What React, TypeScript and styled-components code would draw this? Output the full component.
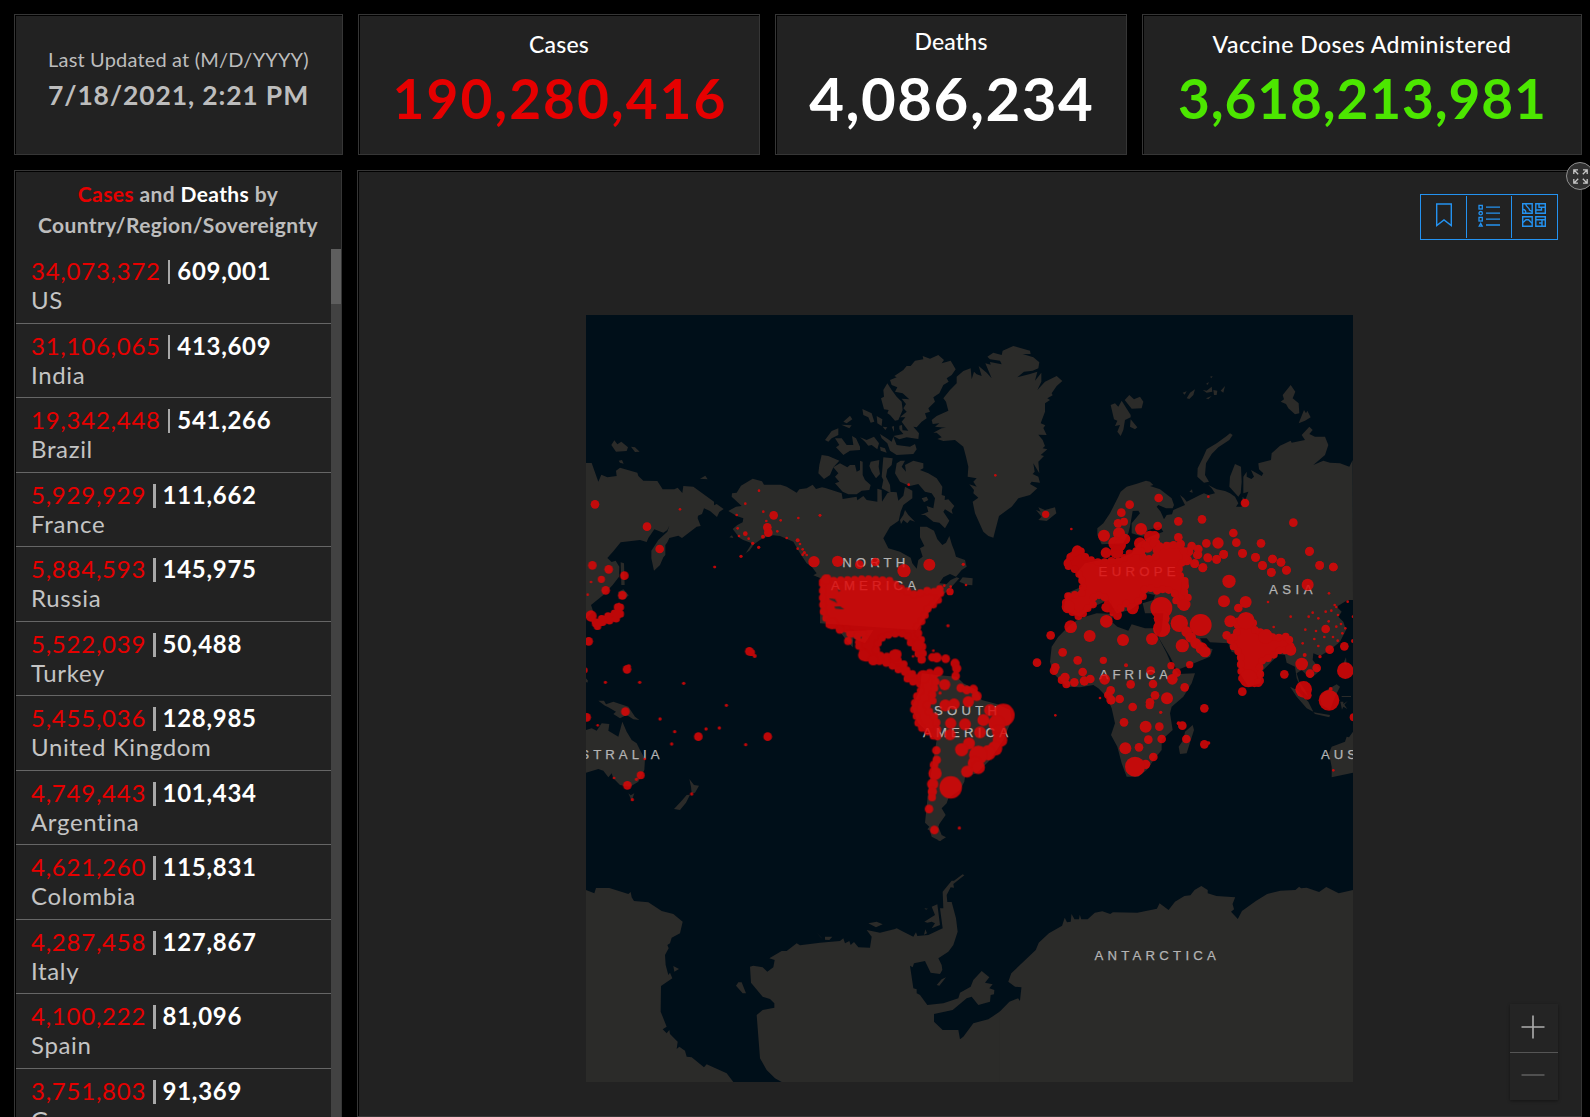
import React from 'react';
import styled, { createGlobalStyle, css } from 'styled-components';

const GlobalStyle = createGlobalStyle`
  * { box-sizing: border-box; }
  html, body { margin: 0; padding: 0; background: #000; overflow: hidden; }
  body { font-family: Lato, 'Open Sans', sans-serif; }
`;

const Dashboard = styled.main`
  width: 1590px;
  height: 1117px;
  padding: 14px 8px 0 14px;
  display: flex;
  flex-direction: column;
  gap: 15px;
  overflow: hidden;
  background: #000;
  color: #bdbdbd;
`;

const TopRow = styled.header`
  display: grid;
  grid-template-columns: 329px 402px 352px 440px;
  gap: 15px;
  height: 141px;
`;

const MainRow = styled.div`
  flex: 1;
  min-height: 0;
  display: grid;
  grid-template-columns: 328px 1225px;
  gap: 15px;
`;

const panel = css`
  background: #222;
  border: 1px solid #363636;
  box-shadow: inset 1px 1px 0 #000;
`;

const Card = styled.section<{ $top: number }>`
  ${panel}
  display: flex;
  flex-direction: column;
  align-items: center;
  padding-top: ${(p) => p.$top}px;
  white-space: nowrap;
`;

const UpdatedLabel = styled.div`
  font-size: 20px;
  line-height: 24px;
  letter-spacing: 0.17px;
`;

const UpdatedValue = styled.div`
  font-size: 26.5px;
  font-weight: 700;
  line-height: 32px;
  margin-top: 8px;
  letter-spacing: 0.85px;
`;

const CardTitle = styled.div<{ $spacing?: number }>`
  color: #fff;
  font-size: 23px;
  font-weight: 500;
  line-height: 28px;
  letter-spacing: ${(p) => p.$spacing ?? 0.2}px;
`;

const Figure = styled.div<{ $color: string; $size: number; $gap: number; $spacing: number }>`
  color: ${(p) => p.$color};
  font-size: ${(p) => p.$size}px;
  font-weight: 700;
  line-height: 64px;
  margin-top: ${(p) => p.$gap}px;
  margin-right: ${(p) => -p.$spacing}px;
  letter-spacing: ${(p) => p.$spacing}px;
`;

const ListPanel = styled.section`
  ${panel}
  border-bottom: 0;
  display: flex;
  flex-direction: column;
  min-height: 0;
  overflow: hidden;
`;

const ListTitle = styled.h2`
  margin: 0;
  height: 78px;
  padding: 7px 0 0;
  text-align: center;
  font-size: 21px;
  line-height: 31px;
  font-weight: 700;
  letter-spacing: 0.38px;
  flex: none;
`;

const Tint = styled.span<{ $color: string }>`
  color: ${(p) => p.$color};
`;

const ListBody = styled.div`
  flex: 1;
  min-height: 0;
  display: flex;
`;

const Rows = styled.ul`
  list-style: none;
  margin: 0 0 0 1px;
  padding: 0;
  flex: 1;
  overflow: hidden;
`;

const Row = styled.li`
  height: 74.5px;
  padding: 7px 0 0 15px;
  border-bottom: 1px solid #666;
  font-size: 24px;
  line-height: 29px;
  white-space: nowrap;
`;

const RowFigures = styled.div`
  display: flex;
`;

const RowCases = styled.span`
  color: #e60000;
  letter-spacing: 0.75px;
`;

const RowBar = styled.i`
  width: 2.5px;
  height: 24px;
  margin: 4px 7px 0 7px;
  background: #a8a8a8;
`;

const RowDeaths = styled.span`
  color: #fff;
  font-weight: 700;
  letter-spacing: 0.7px;
`;

const RowName = styled.div`
  color: #c4c4c4;
  letter-spacing: 0.65px;
`;

const ScrollTrack = styled.div`
  width: 10px;
  background: #424242;
`;

const ScrollThumb = styled.div`
  height: 55px;
  background: #5e5e5e;
`;

const MapPanel = styled.section`
  ${panel}
  position: relative;
  padding: 144px 0 0 228px;
`;

const MapSvg = styled.svg`
  display: block;
  width: 767px;
  height: 767px;
`;

const Toolbar = styled.div`
  position: absolute;
  top: 23px;
  right: 23px;
  width: 138px;
  height: 46px;
  display: flex;
  border: 1px solid #2492f0;
  padding: 1px 0;
`;

const ToolButton = styled.button<{ $shift?: number }>`
  flex: 1;
  border: 0;
  padding: 0 0 4px;
  background: none;
  color: #2492f0;
  display: flex;
  align-items: center;
  justify-content: center;
  & + & { border-left: 1px solid #2492f0; }
  svg { margin-left: ${(p) => p.$shift ?? 0}px; }
`;

const ExpandButton = styled.button`
  position: absolute;
  top: -9px;
  right: -13px;
  width: 28px;
  height: 28px;
  padding: 0;
  border: 1px solid #8f8f8f;
  border-radius: 50%;
  background: #303030;
  color: #c8c8c8;
  display: flex;
  align-items: center;
  justify-content: center;
`;

const ZoomBox = styled.div`
  position: absolute;
  right: 23px;
  top: 833px;
  width: 48px;
  height: 96px;
  display: flex;
  flex-direction: column;
  background: #242424;
  box-shadow: 0 1px 3px rgba(0, 0, 0, 0.4);
`;

const ZoomButton = styled.button<{ $dim?: boolean }>`
  flex: 1;
  padding: 0 2px 2px 0;
  border: 0;
  background: none;
  color: ${(p) => (p.$dim ? '#5c5c5c' : '#adadad')};
  display: flex;
  align-items: center;
  justify-content: center;
  & + & { border-top: 1px solid #555; }
`;

const countries: [string, string, string][] = [
  ['34,073,372', '609,001', 'US'],
  ['31,106,065', '413,609', 'India'],
  ['19,342,448', '541,266', 'Brazil'],
  ['5,929,929', '111,662', 'France'],
  ['5,884,593', '145,975', 'Russia'],
  ['5,522,039', '50,488', 'Turkey'],
  ['5,455,036', '128,985', 'United Kingdom'],
  ['4,749,443', '101,434', 'Argentina'],
  ['4,621,260', '115,831', 'Colombia'],
  ['4,287,458', '127,867', 'Italy'],
  ['4,100,222', '81,096', 'Spain'],
  ['3,751,803', '91,369', 'Germany'],
];

/* Map geometry is kept per region, in thirds of a pixel from the region's origin. */
type Region = { at: [number, number]; sx?: number; land: string; cases?: string; dots: number[][] };

const regions: Region[] = [
  {
    at: [580, 310],
    land: `M18 459L35 459L55 515L64 494L82 502L110 498L108 482L120 473L172 488L175 498L190 512L232 513L248 538L283 538L293 533L307 549L310 528L340 530L402 575L402 586L410 582L431 597L418 606L411 621L390 603L372 595L366 612L354 617L353 625L362 648L350 650L306 684L295 677L268 684L262 697L256 705L256 735L250 742L240 765L222 782L214 745L214 722L235 690L262 665L268 647L262 660L250 668L223 658L205 684L200 696L180 690L122 697L100 724L82 744L95 756L107 752L118 770L117 800L98 825L70 855L33 885L40 905L18 925Z
      M122 757L132 760L134 825L124 825ZM115 845L130 838L146 856L134 868L116 868Z
      M94 405L103 391L112 403L124 395L144 412L140 423L108 425ZM153 410L165 412L179 425L165 426ZM116 452L126 450L131 461L120 458ZM360 506L376 497L383 508ZM448 682L456 676L460 684Z`,
    dots: [[45,583,13],[201,650,13],[239,717,13],[300,598,4],[537,542,4],[496,581,4],[550,605,4],[470,615,4],[581,616,13],[602,631,4],[655,624,4],[720,616,4],[559,633,4],[562,652,13],[565,668,13],[592,664,4],[549,680,6],[473,655,4],[477,678,4],[496,671,7],[506,686,4],[518,700,5],[536,712,5],[483,739,5],[620,684,4],[653,691,6],[660,702,4],[653,716,4],[668,718,4],[673,728,5],[668,734,4],[680,735,4],[702,755,17],[404,771,4]],
  },
  {
    at: [800, 330],
    land: `M-215 543L-192 530L-175 528L-205 500L-204 490L-190 488L-177 467L-142 446L-114 454L-108 464L-58 464L-40 470L-10 488L-2 478L20 475L38 464L48 477L66 472L76 474L125 490L128 507L170 500L172 511L190 498L200 510L232 515L232 476L245 480L246 515L262 490L270 485L290 487L295 512L310 497L315 470L337 482L337 505L310 525L302 545L296 572L270 590L250 625L265 655L300 665L332 683L337 700L350 716L355 690L368 680L360 655L373 648L360 622L360 590L380 590L402 602L412 628L427 645L438 638L448 618L456 645L463 662L468 680L495 690L500 710L485 720L468 740L450 732L430 742L418 760L440 762L452 750L470 742L478 745L455 770L440 785L420 800L350 900L60 880L62 745L40 736L50 730L35 710L20 700L0 670L-20 635L-60 618L-80 616L-108 623L-120 630L-138 643L-152 662L-182 682L-162 668L-144 640L-170 630L-182 623L-192 610L-202 597L-188 585L-172 577L-170 565L-190 558Z
      M478 755L488 742L518 745L517 766L500 764Z
      M270 150L290 142L283 138L310 120L320 108L332 108L345 92L370 88L368 78L390 86L415 75L432 90L425 100L452 92L467 118L455 135L440 145L446 155L430 165L418 190L400 202L405 215L385 235L390 245L375 250L380 265L365 275L350 292L340 290L357 310L355 327L320 322L298 328L280 318L310 312L300 300L325 302L305 275L316 262L300 262L320 245L310 235L318 222L305 206L328 208L308 190L285 185L292 172L275 165Z
      M262 160L275 180L290 200L305 215L308 240L295 270L285 272L270 255L262 250L266 240L252 238L243 205L252 200L250 180Z
      M187 237L215 250L223 275L212 278L205 262L190 255ZM230 258L247 268L245 288L232 280ZM130 275L150 257L157 268L140 280ZM124 284L155 286L148 295ZM75 330L95 303L115 295L115 315L95 325L85 335ZM105 325L125 325L140 345L160 345L156 318L168 325L180 350L180 360L150 362L130 375L108 352L118 345ZM180 322L200 330L222 320L237 340L232 358L215 345L205 347L195 335ZM240 312L260 325L275 335L280 320L290 345L330 350L345 342L350 358L340 372L290 375L270 362L262 340L245 325ZM240 350L255 355L260 368L242 362ZM248 290L262 292L256 300ZM275 290L282 288L282 306ZM298 287L306 285L308 305L298 298Z
      M65 375L85 378L118 392L100 412L90 435L72 447L55 430L58 405Z
      M100 412L120 400L142 412L150 405L165 405L170 425L180 420L180 392L188 395L188 435L195 450L212 465L208 480L185 482L170 493L145 493L128 485L105 460L118 455L105 440L115 430Z
      M212 395L238 390L236 410L240 432L228 445L215 425L208 408Z
      M250 382L278 385L275 405L262 418L258 440L270 465L272 490L245 475L250 450L245 440Z
      M290 400L302 392L315 392L305 410L318 425L315 405L340 392L370 400L370 415L360 420L385 430L410 445L427 470L425 495L435 498L434 510L445 508L463 528L455 540L458 552L435 538L430 545L448 572L435 595L418 578L400 575L375 555L362 555L385 545L380 528L400 535L405 505L395 490L375 485L355 462L330 468L300 455L285 430Z
      M315 540L325 555L345 575L330 570L322 580L310 570L303 582L300 570L310 555ZM365 505L380 500L385 510L372 517Z
      M395 270L410 258L445 242L438 215L430 205L450 180L470 160L470 140L490 123L512 115L515 148L522 125L530 133L545 138L536 108L560 128L575 145L556 100L572 104L570 96L605 103L600 92L570 88L562 80L580 68L605 75L608 62L640 48L690 62L692 72L668 72L700 82L718 97L715 115L698 122L672 125L652 142L690 132L712 125L705 152L724 128L724 155L712 180L735 155L770 138L787 153L770 168L755 190L758 196L742 205L750 210L735 220L735 245L722 280L736 286L730 294L740 315L715 314L728 330L735 348L728 355L742 358L722 375L732 378L715 395L718 430L700 400L704 425L698 432L715 440L720 458L695 455L690 462L712 475L690 495L655 505L635 530L597 558L580 623L565 618L550 605L525 550L518 515L535 503L520 490L522 480L508 463L530 470L520 455L530 445L503 440L505 410L498 380L490 350L465 330L430 333L412 327L425 322L410 308L400 308L425 295L438 293L405 290L418 280L398 282Z
      M708 540L722 545L715 532L735 540L765 532L769 550L740 573L715 570L725 560Z`,
    dots: [[586,436,4],[326,464,4],[60,556,4],[737,553,11],[113,694,17],[178,704,13],[226,696,13],[312,722,20],[388,704,18],[490,703,5],[498,765,4],[450,785,11],[433,767,4],[452,770,4]],
  },
  {
    at: [1060, 330],
    land: `M152 225L165 220L175 230L185 212L212 255L212 262L195 270L190 300L182 318L172 305L180 285L165 288L172 272L162 268ZM194 210L208 195L222 208L240 200L250 215L245 235L215 236ZM212 268L232 292L225 298L210 290Z
      M380 205L390 188L405 178L400 195L388 207ZM368 188L380 184L374 194ZM428 180L440 182L455 170L457 185L440 188ZM460 180L472 182L470 195L462 195ZM482 182L495 168L490 188ZM438 205L455 198L445 208ZM450 140L458 138L454 145ZM438 162L446 156L444 164Z
      M668 195L692 165L706 185L698 205L716 220L718 250L705 253L685 235L678 222L662 215L672 208ZM716 280L732 240L738 250L742 242L752 262L735 272Z
      M518 315L508 330L475 352L455 372L438 400L435 435L447 455L432 458L412 440L413 415L428 385L440 358L470 340L500 318L510 310Z
      M525 402L543 410L545 455L542 490L535 500L508 470L510 440ZM388 485L396 478L398 488Z
      M112 595L130 580L150 550L175 500L182 485L200 470L228 462L258 452L270 455L280 465L270 468L300 478L335 505L342 525L338 535L318 535L295 525L290 530L302 545L312 568L320 555L336 553L340 540L375 525L360 495L372 505L380 515L420 495L432 490L445 495L465 490L455 475L445 465L470 478L495 483L510 490L525 500L535 520L528 530L545 530L548 500L556 510L565 485L550 490L550 440L560 425L560 440L574 447L582 440L573 420L605 438L610 430L597 418L595 400L633 390L635 370L660 347L692 332L695 338L735 330L725 315L748 290L758 300L748 312L765 320L795 320L805 345L795 375L760 405L790 392L810 398L840 400L868 410L878 390L879 810L863 810L830 830L845 845L835 860L850 875L858 900L840 935L810 960L780 978L760 970L758 990L782 1020L765 1035L750 1045L725 1020L710 1030L718 1055L735 1080L745 1100L725 1080L710 1045L705 1010L680 998L675 975L655 972L640 990L610 1020L600 1060L565 1070L540 1030L530 970L515 965L505 940L450 937L440 925L420 925L435 950L458 958L450 980L365 1015L350 1020L330 980L295 922L305 900L310 850L255 850L248 820L280 810L285 795L260 790L240 820L210 840L170 850L145 810L100 830L60 860L10 840L20 790L65 770L50 730L75 700L120 690L180 685L215 670L235 640L270 620L310 605L300 590L265 600L250 620L215 610L215 580L240 550L235 542L218 543L210 590L205 610L190 640L125 643L112 615Z`,
    dots: [[34,597,4],[296,504,13],[209,524,13],[184,548,13],[174,580,13],[192,575,12],[132,617,18],[243,597,18],[293,588,13],[355,574,13],[426,568,13],[445,500,4],[555,519,13],[700,578,13],[177,610,18],[195,627,16],[165,640,20],[180,645,18],[170,665,20],[138,668,16],[240,640,18],[262,650,18],[232,672,18],[270,620,18],[284,618,15],[285,640,16],[258,695,18],[355,622,13],[362,642,13],[520,609,13],[529,638,13],[474,639,17],[439,640,13],[395,648,13],[415,657,13],[412,675,13],[491,673,13],[470,688,13],[444,684,13],[547,670,13],[603,640,13],[586,682,13],[638,687,13],[663,696,13],[749,663,13],[779,706,13],[820,711,13],[608,707,13],[404,701,13],[429,712,13],[680,720,13],[634,727,13],[330,655,18],[300,662,18],[300,680,20],[310,700,24],[345,690,24],[365,672,18],[380,690,16],[386,665,14],[52,662,16],[40,685,20],[75,700,22],[30,700,18],[120,710,22],[160,705,20],[190,705,18],[215,690,18],[240,680,18]],
  },
  {
    at: [580, 560],
    land: `M18 510L35 505L50 512L65 490L88 492L85 512L115 530L127 485L140 515L155 540L170 550L180 570L195 597L193 630L175 665L150 680L120 675L100 655L95 640L85 652L70 632L55 627L18 638Z
      M145 700L152 706L163 700L155 722ZM328 657L342 675L357 677L345 698L335 700L333 680ZM320 705L330 704L318 728L300 750L282 747L305 722Z
      M55 422L72 422L78 433L100 425L145 440L165 470L178 480L160 478L140 465L120 475L100 462L108 455L85 442L75 437ZM18 355L24 362L22 368L18 366Z`,
    cases: 'M46 186L75 172L105 159L117 132L124 150L118 172L100 180L70 186L55 192L50 205Z',
    dots: [[37,16,13],[86,28,13],[133,47,13],[64,58,11],[33,66,4],[77,91,13],[23,104,4],[127,106,13],[33,168,17],[26,244,13],[14,331,9],[141,328,13],[146,320,7],[76,367,5],[179,367,5],[311,370,5],[404,21,4],[439,436,5],[240,477,5],[284,515,5],[275,552,5],[355,530,13],[378,507,5],[418,504,5],[497,554,5],[563,530,13],[508,274,13],[515,278,10],[524,288,6],[136,455,13],[20,472,13],[53,496,4],[194,597,4],[182,646,12],[169,658,5],[142,676,13],[102,654,4],[157,719,5],[335,702,5]],
  },
  {
    at: [790, 560],
    land: `M395 340L440 345L500 350L520 370L560 390L575 420L620 432L660 450L665 480L640 540L600 600L560 640L525 650L523 665L510 690L475 715L470 730L455 745L467 765L448 792L445 800L455 825L468 832L450 843L425 830L420 812L412 808L418 800L405 788L410 740L415 690L430 600L440 540L385 490L365 440L390 390Z
      M150 215L250 210L225 250L190 235L188 262L175 248Z`,
    cases: 'M98 65L108 52L125 62L190 59L230 57L300 62L335 86L375 104L410 92L440 96L452 84L454 92L443 125L414 145L399 179L379 205L394 240L400 275L395 300L387 290L382 270L362 248L349 221L318 221L290 226L268 238L258 268L273 289L302 289L318 274L326 286L324 302L344 314L351 334L371 344L385 356L402 341L431 336L436 352L438 375L426 400L432 420L411 435L418 455L438 474L442 500L442 536L435 531L415 516L386 498L382 475L370 445L378 412L392 395L390 372L354 361L344 336L318 326L300 312L270 304L250 304L229 294L216 270L199 248L228 236L218 218L205 228L184 224L170 206L150 211L142 196L119 196L101 160L98 124Z',
    dots: [[174,243,12],[464,374,17],[512,384,13],[530,390,13],[550,388,14],[560,408,15],[535,425,17],[427,292,13],[440,293,15],[467,296,13],[495,310,14],[500,325,14],[497,348,13],[445,335,15],[430,272,4],[369,289,4],[474,197,5],[450,399,5],[466,436,18],[492,432,17],[482,490,17],[525,493,18],[480,524,17],[580,480,18],[570,517,18],[640,465,34],[600,450,18],[620,490,25],[628,515,22],[630,540,22],[615,565,22],[595,578,23],[565,585,28],[555,610,22],[537,550,18],[515,569,20],[565,622,20],[531,635,18],[482,682,34],[439,571,13],[440,600,13],[432,615,13],[435,640,20],[428,672,17],[427,695,14],[426,712,12],[417,747,13],[433,810,13],[508,804,5],[108,58,15],[150,207,13],[180,220,12],[126,190,18],[385,255,17],[395,298,13],[316,285,18],[400,350,20],[222,285,18],[250,300,16]],
  },
  {
    at: [1030, 550],
    land: `M120 225L150 205L200 190L250 192L245 215L262 230L295 242L305 223L345 235L372 235L385 262L410 310L425 345L445 372L495 370L485 400L460 440L425 470L420 490L428 540L395 570L395 600L375 625L350 660L325 680L290 680L275 640L262 590L243 555L255 520L245 475L230 440L205 415L190 405L150 412L110 410L70 370L60 335L65 290L85 260Z
      M488 525L492 540L470 610L450 612L446 590L460 570L465 545Z
      M780 410L800 420L835 455L850 485L830 475L800 440ZM850 487L900 495L898 502L855 492ZM870 440L890 420L920 403L930 410L915 440L900 480L875 465ZM940 340L948 322L950 345ZM935 438L963 438L963 441L935 441ZM931 455L940 455L940 462L953 453L943 464L952 477L940 470L936 479Z
      M969 545L957 562L950 560L945 575L905 590L897 610L905 650L905 682L969 668Z`,
    cases: `M112 40L124 14L150 0L170 26L195 34L215 39L240 32L270 34L300 9L334 -1L334 19L350 29L379 19L379 -11L440 -16L455 -14L468 22L446 50L451 80L472 100L458 118L474 140L472 161L460 170L439 155L434 130L405 114L385 126L370 114L344 116L338 144L318 158L313 180L302 176L289 161L271 175L262 198L245 184L229 174L236 165L219 134L191 138L189 167L172 175L150 202L132 190L104 170L112 139L159 129L157 93L142 61L116 50Z
      M624 214L648 196L668 212L676 246L706 246L735 266L760 259L780 262L776 280L790 300L780 308L755 296L721 323L698 328L688 355L694 388L682 401L655 398L636 386L632 350L632 311L614 296L598 264L619 260Z`,
    dots: [[62,256,13],[122,230,19],[179,258,18],[229,214,19],[279,270,18],[21,338,13],[98,307,13],[76,352,13],[72,362,13],[143,331,13],[220,331,11],[288,346,6],[158,366,13],[105,382,14],[95,390,12],[109,403,12],[133,397,13],[163,393,14],[181,387,13],[224,388,16],[302,403,13],[362,362,13],[369,402,13],[423,347,11],[440,368,13],[427,388,16],[464,412,13],[479,344,11],[242,421,13],[235,435,13],[243,450,14],[269,447,13],[210,444,4],[308,471,13],[375,436,13],[360,457,13],[359,466,12],[411,445,18],[392,487,5],[282,517,13],[347,530,18],[388,530,13],[395,567,13],[355,569,13],[327,592,13],[286,595,18],[370,621,13],[347,643,14],[315,650,30],[76,496,4],[523,475,13],[457,527,13],[446,520,6],[469,567,13],[523,583,13],[536,579,5],[394,174,33],[395,205,24],[395,235,26],[366,267,18],[448,220,26],[512,225,33],[457,287,20],[470,245,16],[482,262,16],[497,280,16],[515,295,18],[525,305,17],[582,154,18],[597,94,20],[647,156,18],[625,174,13],[601,214,18],[590,256,13],[637,425,13],[763,373,13],[533,23,13],[560,28,13],[518,54,13],[494,41,13],[504,14,13],[581,13,13],[838,5,13],[638,10,13],[677,22,13],[697,46,13],[727,27,13],[724,67,13],[753,37,13],[769,61,13],[869,46,13],[910,51,13],[833,104,18],[897,130,4],[714,156,4],[782,200,4],[731,231,4],[848,188,4],[836,200,4],[865,205,4],[887,185,4],[904,182,4],[914,165,4],[919,171,4],[953,155,4],[924,195,4],[896,214,4],[933,222,4],[919,230,4],[946,235,4],[887,237,13],[858,243,4],[826,239,4],[853,267,4],[883,261,4],[909,261,4],[937,250,4],[923,272,4],[818,280,4],[865,288,4],[899,299,13],[943,289,13],[870,320,5],[824,315,6],[815,342,19],[860,354,13],[840,371,13],[946,362,25],[821,418,25],[832,436,13],[897,451,31],[902,417,6],[971,502,12],[969,200,4],[969,273,6],[910,661,4],[648,212,26],[655,385,27],[685,398,13],[782,300,17],[707,260,22],[227,172,13],[262,197,13],[308,176,17],[115,170,20],[462,165,18]],
  },
  {
    at: [580, 840],
    land: `M18 150L43 160L48 144L88 144L145 162L152 156L155 172L162 183L205 187L245 213L280 222L308 245L300 280L275 293L270 310L262 315L266 325L255 345L257 375L265 405L270 398L277 415L255 430L243 438L242 515L260 560L248 568L260 580L268 570L270 582L293 605L290 627L298 620L315 632L320 650L335 652L372 682L380 673L440 700L460 726L18 726Z
      M605 726L585 715L560 690L540 655L530 525L548 510L583 503L583 490L570 477L548 470L513 428L510 380L520 377L548 382L562 395L580 382L584 360L568 355L605 333L620 333L650 310L660 316L720 308L780 303L790 295L795 310L808 303L812 315L822 306L835 322L870 323L875 290L860 270L900 278L945 267L950 265L970 275L1000 290L1008 277L1012 288L1045 285L1088 265L1080 205L1090 205L1088 155L1115 122L1122 122L1148 103L1153 106L1120 132L1122 143L1112 142L1100 165L1102 186L1115 186L1128 235L1133 275L1120 315L1105 335L1075 355L1085 375L1087 390L1080 402L1052 398L1035 363L1002 370L998 382L990 377L1000 445L1010 448L1010 460L1020 465L1042 495L1090 490L1135 475L1140 458L1172 440L1180 420L1205 393L1228 412L1215 428L1238 433L1228 445L1243 450L1242 463L1232 465L1230 485L1195 495L1175 470L1160 475L1118 510L1062 522L1062 545L1088 570L1135 570L1140 598L1150 590L1180 550L1225 538L1262 513L1262 726Z
      M865 250L890 245L908 253L888 262ZM735 290L757 290L748 300L735 299ZM468 437L475 427L485 427L498 460L488 460ZM280 378L297 387L283 395ZM1070 435L1085 418L1098 412L1078 437ZM1033 245L1065 225L1055 200L1072 193L1080 255L1055 265L1065 250L1055 245L1042 248ZM1033 205L1044 206L1038 209ZM1036 268L1041 280L1032 284ZM710 278L728 297L722 292ZM1072 0L1085 0L1080 3Z`,
    dots: [],
  },
  {
    at: [1000, 840],
    sx: 0.3763,
    land: `M-1 515L25 485L48 475L53 483L57 442L40 440L22 425L30 400L95 330L103 308L130 280L165 257L172 233L178 247L188 245L190 222L198 238L210 238L212 224L216 238L233 238L252 218L272 214L293 222L300 217L365 218L417 206L424 190L448 210L465 185L490 168L506 166L517 150L535 138L552 150L552 160L575 168L625 172L618 192L622 208L614 215L632 237L643 213L680 183L710 162L745 152L785 150L795 140L800 145L815 143L848 156L867 141L900 160L939 150L939 726L-1 726Z`,
    dots: [],
  },
];

const labels: { x: number; y: number; w: number; t: string }[] = [
  { x: 842.2, y: 567.4, w: 63, t: 'NORTH' },
  { x: 831, y: 590.2, w: 85, t: 'AMERICA' },
  { x: 934, y: 714.7, w: 63, t: 'SOUTH' },
  { x: 923, y: 736.9, w: 85, t: 'AMERICA' },
  { x: 1098.6, y: 576.3, w: 77, t: 'EUROPE' },
  { x: 1269, y: 593.7, w: 43.5, t: 'ASIA' },
  { x: 1099.6, y: 679, w: 68.5, t: 'AFRICA' },
  { x: 554, y: 759.3, w: 105.5, t: 'AUSTRALIA' },
  { x: 1321, y: 759.3, w: 105.5, t: 'AUSTRALIA' },
  { x: 1094.4, y: 959.7, w: 121.5, t: 'ANTARCTICA' },
];

const place = (r: Region) => `translate(${r.at[0]} ${r.at[1]}) scale(${r.sx ?? 1 / 3} ${1 / 3})`;

function WorldMap() {
  return (
    <MapSvg viewBox="586 315 767 767" role="img" aria-label="World map of cases">
      <rect x="586" y="315" width="767" height="767" fill="#000f19" />
      <g fill="#2b2b29">
        {regions.map((r, i) => (
          <path key={i} d={r.land} transform={place(r)} />
        ))}
      </g>
      <g fill="#b4b4b4" stroke="#b4b4b4" strokeWidth="0.25" fontFamily="'Liberation Sans', Arial, sans-serif" fontSize="13.2">
        {labels.map((l, i) => (
          <text key={i} x={l.x} y={l.y} textLength={l.w} lengthAdjust="spacing">
            {l.t}
          </text>
        ))}
      </g>
      <g fill="#e00606" stroke="#e00606" strokeLinejoin="round" opacity="0.85">
        {regions.map((r, i) => (
          <g key={i} transform={place(r)}>
            {r.cases && <path d={r.cases} strokeWidth="8" />}
            {/* Beaded outline: the overlapping markers along the edge of a dense area */}
            {r.cases && <path d={r.cases} fill="none" strokeWidth="23" strokeLinecap="round" strokeDasharray="0 21" />}
            {r.dots.map(([x, y, q], j) => (
              <circle key={j} cx={x} cy={y} r={q} stroke="none" />
            ))}
          </g>
        ))}
      </g>
      <g fill="#2b2b29" transform="translate(790 560) scale(.3333)">
        <path d="M118 115L135 117L142 130L136 126L120 119ZM133 140L150 139L163 148L148 147L136 146ZM143 88L152 92L146 95Z" />
      </g>
    </MapSvg>
  );
}

const BookmarkIcon = () => (
  <svg width="18" height="24" viewBox="0 0 18 24" fill="none" stroke="currentColor" strokeWidth="1.4">
    <path d="M1.7 1H16.3V22.5L9 17L1.7 22.5Z" />
  </svg>
);

const LegendIcon = () => (
  <svg width="22" height="24" viewBox="0 0 22 24" fill="none" stroke="currentColor" strokeWidth="1.3">
    <path d="M8 4.2H22M8 10.2H22M8 16.2H22M8 22H22" />
    <rect x="1" y="2.4" width="3.3" height="3.6" />
    <circle cx="2.7" cy="10.2" r="1.7" />
    <rect x="1" y="14.4" width="3.3" height="3.6" />
    <path d="M2.7 20.4L4.2 23.2H1.2Z" />
  </svg>
);

const BasemapIcon = () => (
  <svg width="24" height="24" viewBox="0 0 24 24" fill="none" stroke="currentColor" strokeWidth="1.4">
    <path d="M.7.7H10.2V10.2H.7ZM13.8.7H23.3V10.2H13.8ZM.7 13.8H10.2V23.3H.7ZM13.8 13.8H23.3V23.3H13.8Z" />
    <path d="M3.8 1C4 4.5 7.5 4.5 7.5 7L10 8.3M1 6.5C3.2 6.5 3.8 8 3.8 10M17 1V4.2H23M14 7H19.5V4.5M1 19.5L4 16.8H6.5L10 20.3M14 16.8H23M20 17V23M17 20H20" />
  </svg>
);

const ExpandIcon = () => (
  <svg width="15" height="15" viewBox="0 0 15 15" fill="none" stroke="currentColor" strokeWidth="1.3">
    <path d="M.8 5V.8H5M.8.8L5.2 5.2M10 .8H14.2V5M14.2.8L9.8 5.2M.8 10V14.2H5M.8 14.2L5.2 9.8M14.2 10V14.2H10M14.2 14.2L9.8 9.8" />
  </svg>
);

const SignIcon = ({ plus }: { plus?: boolean }) => (
  <svg width="24" height="24" viewBox="0 0 24 24" fill="none" stroke="currentColor" strokeWidth="1.6">
    <path d={plus ? 'M.5 12H23.5M12 .5V23.5' : 'M.5 12H23.5'} />
  </svg>
);

export default function App() {
  return (
    <>
      <GlobalStyle />
      <Dashboard>
        <TopRow>
          <Card $top={32}>
            <UpdatedLabel>Last Updated at (M/D/YYYY)</UpdatedLabel>
            <UpdatedValue>7/18/2021, 2:21 PM</UpdatedValue>
          </Card>
          <Card $top={15}>
            <CardTitle>Cases</CardTitle>
            <Figure $color="#e60000" $size={55} $gap={8} $spacing={2}>190,280,416</Figure>
          </Card>
          <Card $top={12}>
            <CardTitle>Deaths</CardTitle>
            <Figure $color="#fff" $size={60} $gap={11} $spacing={1.5}>4,086,234</Figure>
          </Card>
          <Card $top={15}>
            <CardTitle $spacing={0.48}>Vaccine Doses Administered</CardTitle>
            <Figure $color="#4ce600" $size={55} $gap={8} $spacing={0.85}>3,618,213,981</Figure>
          </Card>
        </TopRow>
        <MainRow>
          <ListPanel>
            <ListTitle>
              <Tint $color="#e60000">Cases</Tint> and <Tint $color="#fff">Deaths</Tint> by
              <br />
              Country/Region/Sovereignty
            </ListTitle>
            <ListBody>
              <Rows>
                {countries.map(([cases, deaths, name]) => (
                  <Row key={name}>
                    <RowFigures>
                      <RowCases>{cases}</RowCases>
                      <RowBar />
                      <RowDeaths>{deaths}</RowDeaths>
                    </RowFigures>
                    <RowName>{name}</RowName>
                  </Row>
                ))}
              </Rows>
              <ScrollTrack>
                <ScrollThumb />
              </ScrollTrack>
            </ListBody>
          </ListPanel>
          <MapPanel>
            <WorldMap />
            <Toolbar>
              <ToolButton $shift={1} aria-label="Bookmarks"><BookmarkIcon /></ToolButton>
              <ToolButton aria-label="Legend"><LegendIcon /></ToolButton>
              <ToolButton $shift={-2} aria-label="Basemaps"><BasemapIcon /></ToolButton>
            </Toolbar>
            <ZoomBox>
              <ZoomButton aria-label="Zoom in"><SignIcon plus /></ZoomButton>
              <ZoomButton $dim aria-label="Zoom out"><SignIcon /></ZoomButton>
            </ZoomBox>
            <ExpandButton aria-label="Expand"><ExpandIcon /></ExpandButton>
          </MapPanel>
        </MainRow>
      </Dashboard>
    </>
  );
}
